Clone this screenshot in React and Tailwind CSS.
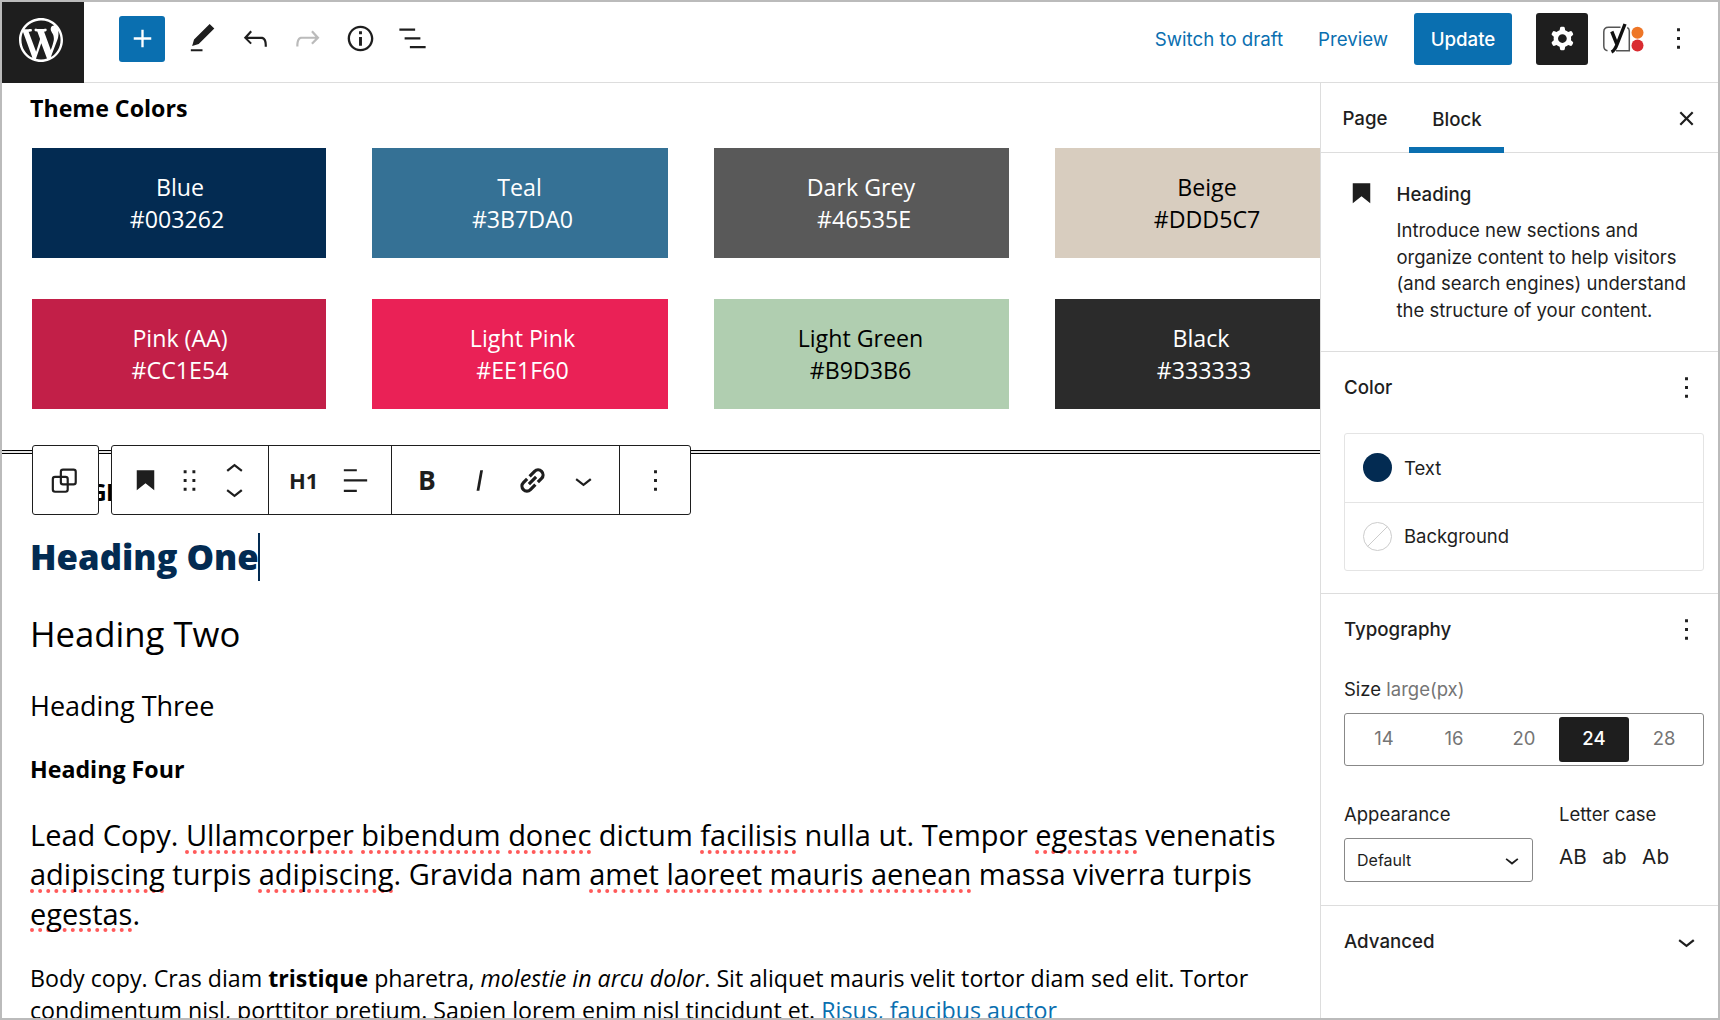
import React, { useState } from "react";

const Icon = ({ d, size = "h-[35px] w-[35px]", className = "", children }) => (
  <svg
    viewBox="0 0 24 24"
    className={`shrink-0 ${size} ${className}`}
    fill="currentColor"
    fillRule="evenodd"
  >
    {d ? <path d={d} /> : children}
  </svg>
);

const icons = {
  plus: "M18 11.2h-5.2V6h-1.6v5.2H6v1.6h5.2V18h1.6v-5.2H18z",
  edit: "M20.1 5.1L16.9 2 6.2 12.7l-1.3 4.4 4.5-1.3L20.1 5.1zM4 20.8h8v-1.5H4v1.5z",
  undo: "M18.3 11.7c-.6-.6-1.4-.9-2.3-.9H6.7l2.9-3.3-1.1-1-4.5 5L8.5 16l1-1-2.7-2.7H16c.5 0 .9.2 1.3.5 1 1 1 3.4 1 4.5v.3h1.5v-.2c0-1.5 0-4.3-1.5-5.7z",
  redo: "M15.6 6.5l-1.1 1 2.9 3.3H8c-.9 0-1.7.3-2.3.9-1.4 1.5-1.4 4.2-1.4 5.6v.2h1.5v-.3c0-1.1 0-3.5 1-4.5.3-.3.7-.5 1.3-.5h9.2L14.5 15l1.1 1.1 4.6-4.6-4.6-5z",
  info: "M12 3.2c-4.8 0-8.8 3.9-8.8 8.8 0 4.8 3.9 8.8 8.8 8.8 4.8 0 8.8-3.9 8.8-8.8 0-4.8-4-8.8-8.8-8.8zm0 16c-4 0-7.2-3.3-7.2-7.2C4.8 8 8 4.8 12 4.8s7.2 3.3 7.2 7.2c0 4-3.2 7.2-7.2 7.2zM11 17h2v-6h-2v6zm0-8h2V7h-2v2z",
  listView:
    "M13.8 5.2H3v1.5h10.8V5.2zm-3.6 12v1.5H21v-1.5H10.2zm7.2-6H6.6v1.5h10.8v-1.5z",
  cog: "M10.289 4.836A1 1 0 0111.275 4h1.306a1 1 0 01.987.836l.244 1.466c.787.26 1.503.679 2.108 1.218l1.393-.522a1 1 0 011.216.437l.653 1.13a1 1 0 01-.23 1.273l-1.148.944a6.025 6.025 0 010 2.435l1.149.946a1 1 0 01.23 1.272l-.653 1.13a1 1 0 01-1.216.437l-1.394-.522c-.605.54-1.32.958-2.108 1.218l-.244 1.466a1 1 0 01-.987.836h-1.306a1 1 0 01-.986-.836l-.244-1.466a5.995 5.995 0 01-2.108-1.218l-1.394.522a1 1 0 01-1.217-.436l-.653-1.131a1 1 0 01.23-1.272l1.149-.946a6.026 6.026 0 010-2.435l-1.148-.944a1 1 0 01-.23-1.272l.653-1.131a1 1 0 011.217-.437l1.393.522a5.994 5.994 0 012.108-1.218l.244-1.466zM14.929 12a3 3 0 11-6 0 3 3 0 016 0z",
  more: "M13 19h-2v-2h2v2zm0-6h-2v-2h2v2zm0-6h-2V5h2v2z",
  close:
    "M12 13.06l3.712 3.713 1.061-1.06L13.061 12l3.712-3.712-1.06-1.06L12 10.938 8.288 7.227l-1.061 1.06L10.939 12l-3.712 3.712 1.06 1.061L12 13.061z",
  heading: "M6 5v13.6l6-4.75 6 4.75V5H6z",
  drag: "M8 7h2V5H8v2zm0 6h2v-2H8v2zm0 6h2v-2H8v2zm6-14v2h2V5h-2zm0 8h2v-2h-2v2zm0 6h2v-2h-2v2z",
  up: "M6.5 12.4L12 8l5.5 4.4-.9 1.2L12 10l-4.5 3.6-1-1.2z",
  down: "M17.5 11.6L12 16l-5.5-4.4.9-1.2L12 14l4.5-3.6 1 1.2z",
  align:
    "M4 19.8h8.9v-1.5H4v1.5zm8.9-15.6H4v1.5h8.9V4.2zm-8.9 7v1.5h16v-1.5H4z",
  italic: "M12.5 5L10 19h1.9l2.5-14z",
};

const WordPressLogo = () => (
  <svg viewBox="0 0 20 20" className="h-11 w-11" fill="#fff">
    <path d="M20 10c0-5.51-4.49-10-10-10C4.48 0 0 4.49 0 10c0 5.52 4.48 10 10 10 5.51 0 10-4.48 10-10zM7.78 15.37L4.37 6.22c.55-.02 1.17-.08 1.17-.08.5-.06.44-1.13-.06-1.11 0 0-1.45.11-2.37.11-.18 0-.37 0-.58-.01C4.12 2.69 6.87 1.11 10 1.11c2.33 0 4.45.87 6.05 2.34-.68-.11-1.65.39-1.65 1.58 0 .74.45 1.36.9 2.1.35.61.55 1.36.55 2.46 0 1.49-1.4 5-1.4 5l-3.03-8.37c.54-.02.82-.17.82-.17.5-.05.44-1.25-.06-1.22 0 0-1.44.12-2.38.12-.87 0-2.33-.12-2.33-.12-.5-.03-.56 1.2-.06 1.22l.92.08 1.26 3.41zM17.41 10c.24-.64.74-1.87.43-4.25.7 1.29 1.05 2.71 1.05 4.25 0 3.29-1.73 6.24-4.4 7.78.97-2.59 1.94-5.2 2.92-7.78zM6.1 18.09C3.12 16.65 1.11 13.53 1.11 10c0-1.3.23-2.48.72-3.59C3.25 10.3 4.67 14.2 6.1 18.09zm4.03-6.63l2.58 6.98c-.86.29-1.76.45-2.71.45-.79 0-1.57-.11-2.29-.33.81-2.38 1.62-4.74 2.42-7.1z" />
  </svg>
);

const YoastLogo = () => (
  <svg viewBox="0 0 42 36" className="h-9 w-[42px] shrink-0" fill="none">
    <path
      d="M18.5 6.2H6.5Q1.8 6.200 1.800 11V25Q1.800 29 5.500 29.800M14 29.800H27.300V10Q27.300 7.500 25.300 6.500"
      stroke="#555"
      strokeWidth="1.500"
    />
    <path
      d="M9.800 10.500L15 23.500M23 3L15 23.500Q12.800 29.500 9.500 31"
      stroke="#111"
      strokeWidth="3.400"
    />
    <circle cx="35.500" cy="11.800" r="6" fill="#ee7627" />
    <circle cx="35.500" cy="24.600" r="6" fill="#d92b30" />
  </svg>
);

const Header = () => (
  <header className="flex h-[81px] shrink-0 border-b border-[#ddd]">
    <div className="flex h-[81px] w-[82px] items-center bg-[#1e1e1e] pb-1.5 pl-[17px]">
      <WordPressLogo />
    </div>
    <div className="flex h-[73px] items-center pl-[35px]">
      <button className="flex h-[46px] w-[46px] items-center justify-center rounded-[3px] bg-[#0a6fb0] text-white">
        <Icon d={icons.plus} />
      </button>
      <div className="ml-5 flex gap-[17.500px] text-[#1e1e1e]">
        <Icon d={icons.edit} />
        <Icon d={icons.undo} />
        <Icon d={icons.redo} className="text-[#bbb]" />
        <Icon d={icons.info} />
        <Icon d={icons.listView} />
      </div>
    </div>
    <div className="ml-auto flex h-[73px] items-center pr-[22px] text-[18.700px] text-[#0a6fb0]">
      <button className="w-[130px] pt-[3px] whitespace-nowrap">Switch to draft</button>
      <button className="ml-[34px] w-[70px] pt-[3px] whitespace-nowrap">Preview</button>
      <button className="ml-[26px] h-[52px] w-[98px] rounded-[3px] bg-[#0a6fb0] pt-[3px] font-medium text-white">
        Update
      </button>
      <button className="ml-6 flex h-[52px] w-[52px] items-center justify-center rounded-[3px] bg-[#1e1e1e] text-white">
        <Icon d={icons.cog} />
      </button>
      <div className="ml-[14px] flex">
        <YoastLogo />
      </div>
      <Icon d={icons.more} className="ml-[17px] text-[#1e1e1e]" />
    </div>
  </header>
);

const nbsp = "\u00a0";

const swatches = [
  { name: "Blue", code: "#003262" + nbsp, box: "bg-[#032b52] pl-[2px] text-white" },
  { name: "Teal" + nbsp, code: "#3B7DA0", box: "bg-[#357195] pl-[5px] text-white" },
  { name: "Dark Grey" + nbsp, code: "#46535E", box: "bg-[#595959] pl-[5px] text-white" },
  { name: "Beige", code: "#DDD5C7", box: "bg-[#d8cdbf] pl-[5px] text-black" },
  { name: "Pink (AA)", code: "#CC1E54", box: "bg-[#c21f48] pl-[2px] text-white" },
  { name: "Light Pink", code: "#EE1F60", box: "bg-[#ea2156] pl-[5px] text-white" },
  { name: "Light Green" + nbsp, code: "#B9D3B6" + nbsp, box: "bg-[#b0ceb0] pl-[4px] text-black" },
  { name: "Black" + nbsp + nbsp, code: "#333333" + nbsp, box: "bg-[#2b2b2b] pl-[5px] text-white" },
];

const Miss = ({ children }) => (
  <span className="underline decoration-[#ff5a5a] decoration-dotted decoration-[4px] underline-offset-[4px] [text-decoration-skip-ink:none]">
    {children}
  </span>
);

const BlockToolbar = () => (
  <div className="absolute top-[362px] left-[30px] z-10 flex h-[70px] gap-3 text-[#1e1e1e]">
    <div className="flex w-[67px] items-center justify-center rounded-[3px] border-[1.500px] border-[#1e1e1e] bg-white pr-[2px]">
      <Icon>
        <g fill="none" stroke="currentColor" strokeWidth="1.500">
          <rect x="4" y="9.500" width="10.200" height="10.200" rx="1.500" />
          <rect x="9.500" y="4.500" width="10.200" height="10.200" rx="1.500" />
        </g>
      </Icon>
    </div>
    <div className="flex w-[580px] rounded-[3px] border-[1.500px] border-[#1e1e1e] bg-white">
      <div className="flex w-[157px] items-center border-r border-[#1e1e1e] pl-[16px]">
        <Icon d={icons.heading} />
        <Icon d={icons.drag} className="ml-[9px]" />
        <div className="ml-[10px] flex flex-col">
          <Icon d={icons.up} className="-mb-[7px]" />
          <Icon d={icons.down} className="-mt-[6px]" />
        </div>
      </div>
      <div className="flex w-[123px] items-center border-r border-[#1e1e1e] pl-[20px]">
        <span className="w-[30px] pt-px text-[22px] font-bold">H1</span>
        <Icon d={icons.align} className="ml-[19px]" />
      </div>
      <div className="flex w-[228px] items-center border-r border-[#1e1e1e] pl-[25px]">
        <span className="w-5 pt-px text-center text-[26.500px] font-bold">B</span>
        <Icon d={icons.italic} className="ml-[24.500px]" />
        <Icon className="ml-[18px]">
          <g fill="none" stroke="currentColor" strokeWidth="2.200" transform="rotate(-45 12 12)">
            <path d="M12.600 8.600h4.800a3.400 3.400 0 010 6.800h-3.600M11.400 15.400H6.600a3.400 3.400 0 010-6.800h3.600M8.500 12h7" />
          </g>
        </Icon>
        <Icon d={icons.down} className="ml-[16px]" />
      </div>
      <div className="flex flex-1 items-center justify-center">
        <Icon d={icons.more} />
      </div>
    </div>
  </div>
);

const Canvas = () => (
  <main className="relative w-[1318px] shrink-0 overflow-hidden font-['Open_Sans',sans-serif] text-black">
    <h4 className="mt-[7px] pl-7 text-[23.200px] leading-9 font-bold">Theme Colors</h4>
    <div className="mt-[22px] ml-[30px] grid w-max grid-cols-[294px_296px_295px_299px] gap-x-[46px] gap-y-[41px]">
      {swatches.map((s) => (
        <div
          key={s.name}
          className={`flex h-[110px] flex-col items-center justify-center text-[23.200px] leading-8 ${s.box}`}
        >
          <span>{s.name}</span>
          <span>{s.code}</span>
        </div>
      ))}
    </div>
    <hr className="mt-[41px] h-1 border-y border-black bg-[#e5e5e5]" />
    <BlockToolbar />
    <h4 className="mt-[20px] pl-[30px] text-[23px] leading-9 font-bold tracking-[-0.600px] uppercase">
      Typography
    </h4>
    <h1 className="mt-[23px] ml-7 h-12 w-[230px] border-r-2 border-[#032b52] text-[34.700px] leading-[48px] font-extrabold whitespace-nowrap text-[#032b52]">
      Heading One
    </h1>
    <h2 className="mt-[29px] pl-7 text-[34.700px] leading-[48px]">Heading Two</h2>
    <h3 className="mt-[28px] pl-7 text-[27px] leading-10">Heading Three</h3>
    <h4 className="mt-[25px] pl-7 text-[23.200px] leading-9 font-bold">Heading Four</h4>
    <p className="mt-[28px] pl-7 text-[29px] leading-[39.300px] whitespace-nowrap">
      Lead Copy. <Miss>Ullamcorper</Miss> <Miss>bibendum</Miss> <Miss>donec</Miss> dictum{" "}
      <Miss>facilisis</Miss> nulla ut. Tempor <Miss>egestas</Miss> venenatis
      <br />
      <Miss>adipiscing</Miss> turpis <Miss>adipiscing</Miss>. Gravida nam <Miss>amet</Miss>{" "}
      <Miss>laoreet</Miss> <Miss>mauris</Miss> <Miss>aenean</Miss> massa viverra turpis
      <br />
      <Miss>egestas</Miss>.
    </p>
    <p className="mt-[29px] pl-7 text-[23.200px] leading-8 whitespace-nowrap">
      Body copy. Cras diam <strong>tristique</strong> pharetra, <em>molestie in arcu dolor</em>. Sit
      aliquet mauris velit tortor diam sed elit. Tortor
      <br />
      condimentum nisl, porttitor pretium. Sapien lorem enim nisl tincidunt et.{" "}
      <a className="text-[#0a6fb0]">Risus, faucibus auctor</a>
    </p>
  </main>
);

const PanelTitle = ({ children, icon = icons.more }) => (
  <div className="flex items-center justify-between text-[18.700px] font-medium">
    <span className="pt-0.5">{children}</span>
    <Icon d={icon} />
  </div>
);

const Sidebar = () => {
  const [size, setSize] = useState(24);

  return (
    <aside className="flex flex-1 flex-col border-l border-[#ddd] text-[18.500px] text-[#1e1e1e]">
      <div className="flex h-[70px] shrink-0 border-b border-[#ddd] text-[18.700px] font-medium">
        <button className="w-[88px] pt-1">Page</button>
        <button className="h-[70px] w-[95px] border-b-[6px] border-[#0a6fb0] pt-2.5 pl-px">
          Block
        </button>
        <div className="ml-auto flex items-center pt-px pr-[14px]">
          <Icon d={icons.close} />
        </div>
      </div>

      <div className="flex h-[199px] shrink-0 border-b border-[#ddd] pt-[23px] pl-[22.500px]">
        <Icon d={icons.heading} />
        <div className="ml-[18px]">
          <h2 className="pt-px text-[18.700px] leading-9 font-medium">Heading</h2>
          <p className="mt-1 leading-[26.500px] whitespace-nowrap">
            Introduce new sections and
            <br />
            organize content to help visitors
            <br />
            (and search engines) understand
            <br />
            the structure of your content.
          </p>
        </div>
      </div>

      <div className="h-[242px] shrink-0 border-b border-[#ddd] pt-[18px] pr-[14px] pl-[23px]">
        <PanelTitle>Color</PanelTitle>
        <div className="mt-[28px] flex h-[138px] flex-col rounded-[3px] border-[1.500px] border-[#e4e4e4]">
          <div className="flex flex-1 items-center gap-3 border-b border-[#e4e4e4] pl-[18px]">
            <span className="h-[29px] w-[29px] rounded-full bg-[#032b52]" />
            <span className="pt-[3px]">Text</span>
          </div>
          <div className="flex flex-1 items-center gap-3 pl-[18px]">
            <svg viewBox="0 0 29 29" className="h-[29px] w-[29px]" fill="none" stroke="#ccc">
              <circle cx="14.500" cy="14.500" r="14" />
              <path d="M4.500 24.500l20-20" />
            </svg>
            <span className="pt-0.5">Background</span>
          </div>
        </div>
      </div>

      <div className="h-[312px] shrink-0 border-b border-[#ddd] pt-[18px] pr-[14px] pl-[23px]">
        <PanelTitle>Typography</PanelTitle>
        <div className="mt-[28px] leading-7">
          Size <span className="text-[#757575]">large(px)</span>
        </div>
        <div className="mt-[10px] flex h-[53px] rounded-[3px] border-[1.500px] border-[#888] px-1 py-[3px]">
          {[14, 16, 20, 24, 28].map((n) => (
            <button
              key={n}
              onClick={() => setSize(n)}
              className={`flex-1 rounded-[3px] pb-px ${
                n === size ? "bg-[#1e1e1e] font-medium text-white" : "text-[#757575]"
              }`}
            >
              {n}
            </button>
          ))}
        </div>
        <div className="mt-[34px] flex">
          <div className="w-[189px]">
            <div className="leading-7">Appearance</div>
            <button className="mt-[10px] flex h-11 w-full items-center justify-between rounded-[3px] border-[1.500px] border-[#888] pr-[6px] pl-3 text-[16px]">
              Default
              <Icon d={icons.down} size="h-7 w-7" />
            </button>
          </div>
          <div className="ml-[26px]">
            <div className="leading-7">Letter case</div>
            <div className="mt-[13px] flex gap-[15.500px] text-[20.700px] leading-8">
              <span>AB</span>
              <span>ab</span>
              <span>Ab</span>
            </div>
          </div>
        </div>
      </div>

      <div className="pt-[18px] pr-[14px] pl-[23px]">
        <PanelTitle icon={icons.down}>Advanced</PanelTitle>
      </div>
    </aside>
  );
};

const App = () => (
  <div className="flex h-[1020px] w-[1720px] flex-col overflow-hidden border-2 border-[#bbb] bg-white font-['Inter',sans-serif]">
    <Header />
    <div className="flex min-h-0 flex-1">
      <Canvas />
      <Sidebar />
    </div>
  </div>
);

export default App;
